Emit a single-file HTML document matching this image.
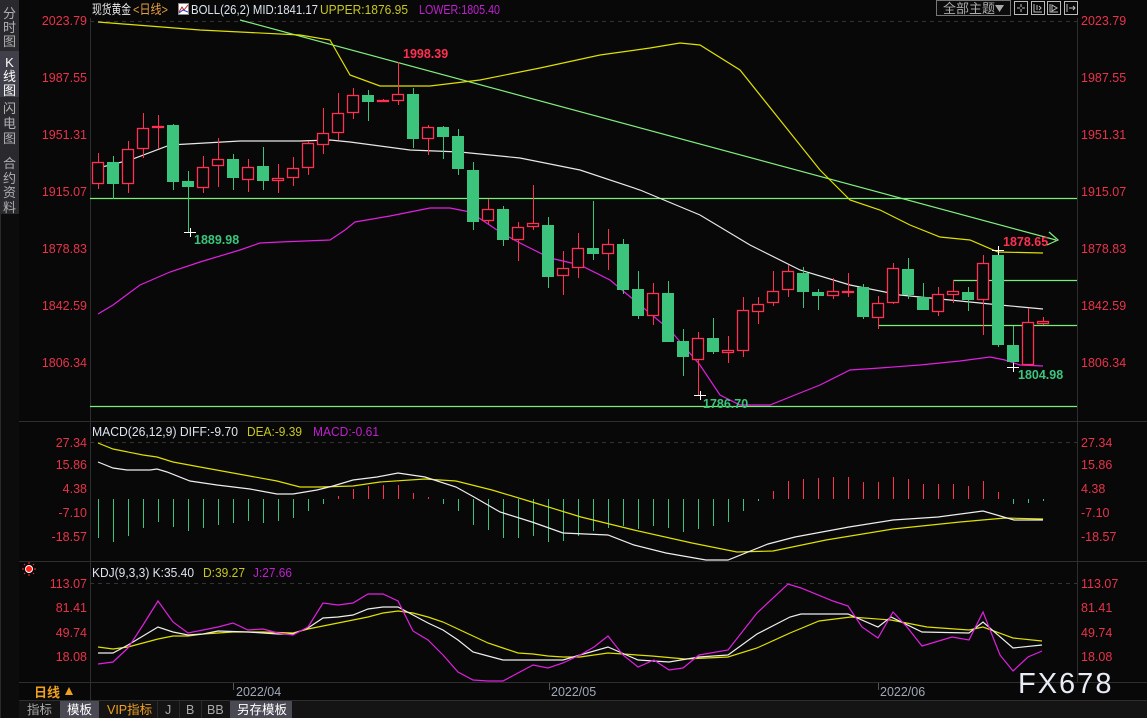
<!DOCTYPE html>
<html><head><meta charset="utf-8"><style>
html,body{margin:0;padding:0;background:#080808;width:1147px;height:718px;overflow:hidden}
svg{display:block}
text{font-family:"Liberation Sans","Noto Sans CJK SC",sans-serif}
</style></head><body>
<svg width="1147" height="718" viewBox="0 0 1147 718" xmlns="http://www.w3.org/2000/svg">
<rect width="1147" height="718" fill="#080808"/>
<rect x="0" y="0" width="19" height="718" fill="#2a2a2e"/>
<rect x="0" y="51" width="19" height="46" fill="#40404a"/>
<rect x="1" y="214" width="18" height="504" fill="#0c0c0c"/>
<g font-size="13" fill="#b0b0b0" text-anchor="middle">
<text x="9.5" y="18">分</text><text x="9.5" y="32">时</text><text x="9.5" y="46">图</text>
<text x="9.5" y="67" fill="#fff">K</text><text x="9.5" y="81" fill="#fff">线</text><text x="9.5" y="95" fill="#fff">图</text>
<text x="9.5" y="113">闪</text><text x="9.5" y="128">电</text><text x="9.5" y="143">图</text>
<text x="9.5" y="168">合</text><text x="9.5" y="183">约</text><text x="9.5" y="197">资</text><text x="9.5" y="212">料</text>
</g>
<g stroke="#2e2e2e" stroke-width="1">
<line x1="90.5" y1="18" x2="90.5" y2="700"/>
<line x1="1077.5" y1="18" x2="1077.5" y2="682"/>
<line x1="19" y1="421.5" x2="1147" y2="421.5"/>
<line x1="19" y1="561.5" x2="1147" y2="561.5"/>
<line x1="19" y1="682.5" x2="1147" y2="682.5"/>
<line x1="19" y1="700.5" x2="1147" y2="700.5"/>
</g>
<g stroke="#333" stroke-dasharray="4,4">
<line x1="90" y1="21.5" x2="1077" y2="21.5"/>
<line x1="90" y1="442.5" x2="1077" y2="442.5"/>
<line x1="90" y1="583.5" x2="1077" y2="583.5"/>
</g>
<g font-size="13">
<text x="92" y="14" fill="#e8e8e8" textLength="39" lengthAdjust="spacingAndGlyphs">现货黄金</text>
<text x="133" y="14" fill="#e8a040" textLength="35" lengthAdjust="spacingAndGlyphs">&lt;日线&gt;</text>
<rect x="178.5" y="3.5" width="10" height="11" fill="#fff" stroke="#888"/>
<path d="M179 12 L182 7 L184 10 L188 5" stroke="#d02020" fill="none"/>
<path d="M179 13 L183 10 L188 12" stroke="#2040d0" fill="none"/>
<text x="191" y="14" fill="#dde4f0" textLength="127" lengthAdjust="spacingAndGlyphs">BOLL(26,2) MID:1841.17</text>
<text x="320" y="14" fill="#c8c820" textLength="88" lengthAdjust="spacingAndGlyphs">UPPER:1876.95</text>
<text x="419" y="14" fill="#c020d0" textLength="81" lengthAdjust="spacingAndGlyphs">LOWER:1805.40</text>
</g>
<rect x="936.5" y="0.5" width="74" height="15" fill="#0c0c0c" stroke="#777"/>
<text x="943" y="13" font-size="13" fill="#aaa">全部主题</text>
<path d="M995 5 L1004 5 L999.5 12 Z" fill="#aaa"/>
<g stroke="#bbb" fill="none">
<rect x="1014.5" y="1.5" width="13" height="13"/><rect x="1031.5" y="1.5" width="13" height="13"/>
<rect x="1047.5" y="1.5" width="13" height="13"/><rect x="1064.5" y="1.5" width="13" height="13"/>
<path d="M1021 4V7M1021 9V12M1017 8H1020M1022 8H1025"/>
<path d="M1034 4V12H1042M1037 5V10M1039 6L1041 8L1039 10"/>
<path d="M1050 4V12H1058M1052 5L1057 8L1052 11Z"/>
<path d="M1067 4V12M1069 8H1075M1073 6L1075 8L1073 10"/>
</g>
<g font-size="12.5" fill="#e8334a">
<g text-anchor="end">
<text x="87" y="25">2023.79</text><text x="87" y="82">1987.55</text><text x="87" y="139">1951.31</text>
<text x="87" y="196">1915.07</text><text x="87" y="253">1878.83</text><text x="87" y="310">1842.59</text><text x="87" y="367">1806.34</text>
<text x="87" y="447">27.34</text><text x="87" y="469">15.86</text><text x="87" y="493">4.38</text><text x="87" y="517">-7.10</text><text x="87" y="541">-18.57</text>
<text x="87" y="588">113.07</text><text x="87" y="612">81.41</text><text x="87" y="637">49.74</text><text x="87" y="661">18.08</text>
</g>
<text x="1081" y="25">2023.79</text><text x="1081" y="82">1987.55</text><text x="1081" y="139">1951.31</text>
<text x="1081" y="196">1915.07</text><text x="1081" y="253">1878.83</text><text x="1081" y="310">1842.59</text><text x="1081" y="367">1806.34</text>
<text x="1081" y="447">27.34</text><text x="1081" y="469">15.86</text><text x="1081" y="493">4.38</text><text x="1081" y="517">-7.10</text><text x="1081" y="541">-18.57</text>
<text x="1081" y="588">113.07</text><text x="1081" y="612">81.41</text><text x="1081" y="637">49.74</text><text x="1081" y="661">18.08</text>
</g>
<g stroke="#78f078" stroke-width="1.2">
<line x1="90" y1="198.5" x2="1077" y2="198.5"/>
<line x1="90" y1="406.5" x2="1077" y2="406.5"/>
<line x1="878" y1="325.5" x2="1077" y2="325.5"/>
<line x1="953" y1="280.5" x2="1077" y2="280.5"/>
<line x1="240" y1="20" x2="1056" y2="240" stroke="#80ee80"/>
<path d="M1049 232 L1058 240 L1047 245" fill="none" stroke="#80ee80"/>
</g>
<polyline fill="none" stroke="#e0e000" stroke-width="1.2" points="98,22 200,30 300,35 330,40 350,75 380,86 430,86 480,80 540,68 600,55 650,48 680,43 700,45 740,70 780,120 820,170 850,200 880,210 910,225 940,237 970,240 998,252 1043,253"/>
<polyline fill="none" stroke="#e8e8e8" stroke-width="1.2" points="98,168 130,160 170,145 240,141 300,141 330,140 350,142 410,150 460,152 520,158 580,170 640,190 700,215 750,245 800,270 850,285 900,295 950,300 1000,305 1043,309"/>
<polyline fill="none" stroke="#e020e0" stroke-width="1.2" points="98,314 113,305 140,285 170,272 200,262 240,250 260,243 280,242 330,240 345,230 355,222 390,216 430,208 450,208 470,212 500,232 520,243 550,258 580,265 610,280 640,305 670,330 700,365 720,395 740,405 770,405 800,393 820,385 850,370 880,368 920,365 960,361 990,357 1005,360 1020,365 1043,366"/>
<path fill="none" stroke="#ff3050" d="M98.5 153V189M128.5 141V193M143.5 113V158M158.5 115V149M203.5 156V193M218.5 138V187M248.5 159V192M278.5 164V193M293.5 157V186M308.5 141V175M323.5 108V154M338.5 93V140M353.5 88V119M383.5 99V102M398.5 62V105M428.5 125V155M488.5 199V224M518.5 222V261M533.5 185V230M563.5 251V295M578.5 233V278M608.5 229V270M653.5 283V325M698.5 332V395M728.5 336V363M743.5 297V357M758.5 297V324M773.5 271V306M788.5 265V297M833.5 278V299M848.5 273V297M878.5 296V329M893.5 263V304M938.5 287V316M953.5 280V303M983.5 255V335M1028.5 308V364M1043.5 317V325"/>
<path fill="none" stroke="#3cc47c" d="M113.5 156V199M173.5 124V190M188.5 171V232M233.5 154V190M263.5 147V190M368.5 90V121M413.5 88V148M443.5 126V159M458.5 129V175M473.5 162V230M503.5 206V246M548.5 217V288M593.5 201V260M623.5 239V294M638.5 271V319M668.5 281V342M683.5 329V376M713.5 318V354M803.5 267V308M818.5 289V310M863.5 284V319M908.5 258V299M923.5 283V310M968.5 287V311M998.5 250V347M1013.5 326V366"/>
<g fill="#080808" stroke="#ff3050" stroke-width="1.3">
<rect x="92.5" y="162.5" width="11" height="21"/><rect x="122.5" y="149.5" width="11" height="34"/><rect x="137.5" y="128.5" width="11" height="20"/><rect x="152.5" y="126.5" width="11" height="1"/>
<rect x="197.5" y="167.5" width="11" height="20"/><rect x="212.5" y="159.5" width="11" height="6"/><rect x="242.5" y="167.5" width="11" height="12"/><rect x="272.5" y="178.5" width="11" height="2"/>
<rect x="287.5" y="168.5" width="11" height="9"/><rect x="302.5" y="143.5" width="11" height="24"/><rect x="317.5" y="133.5" width="11" height="11"/><rect x="332.5" y="113.5" width="11" height="19"/>
<rect x="347.5" y="95.5" width="11" height="17"/><rect x="377.5" y="100.5" width="11" height="1"/><rect x="392.5" y="94.5" width="11" height="6"/><rect x="422.5" y="127.5" width="11" height="11"/>
<rect x="482.5" y="209.5" width="11" height="11"/><rect x="512.5" y="227.5" width="11" height="12"/><rect x="527.5" y="223.5" width="11" height="3"/><rect x="557.5" y="268.5" width="11" height="7"/>
<rect x="572.5" y="248.5" width="11" height="19"/><rect x="602.5" y="244.5" width="11" height="9"/><rect x="647.5" y="293.5" width="11" height="22"/><rect x="692.5" y="338.5" width="11" height="21"/>
<rect x="722.5" y="350.5" width="11" height="2"/><rect x="737.5" y="310.5" width="11" height="40"/><rect x="752.5" y="304.5" width="11" height="7"/><rect x="767.5" y="291.5" width="11" height="11"/>
<rect x="782.5" y="271.5" width="11" height="18"/><rect x="827.5" y="291.5" width="11" height="4"/><rect x="842.5" y="291.5" width="11" height="1"/><rect x="872.5" y="303.5" width="11" height="14"/>
<rect x="887.5" y="268.5" width="11" height="34"/><rect x="932.5" y="294.5" width="11" height="17"/><rect x="947.5" y="291.5" width="11" height="3"/><rect x="977.5" y="263.5" width="11" height="36"/>
<rect x="1022.5" y="322.5" width="11" height="42"/><rect x="1037.5" y="321.5" width="11" height="2"/>
</g>
<g fill="#3cc47c">
<rect x="107" y="162" width="12" height="22"/><rect x="167" y="125" width="12" height="57"/><rect x="182" y="181" width="12" height="6"/><rect x="227" y="159" width="12" height="19"/>
<rect x="257" y="166" width="12" height="15"/><rect x="362" y="95" width="12" height="7"/><rect x="407" y="94" width="12" height="45"/><rect x="437" y="127" width="12" height="10"/>
<rect x="452" y="136" width="12" height="33"/><rect x="467" y="170" width="12" height="52"/><rect x="497" y="209" width="12" height="31"/><rect x="542" y="225" width="12" height="52"/>
<rect x="587" y="248" width="12" height="6"/><rect x="617" y="244" width="12" height="46"/><rect x="632" y="289" width="12" height="27"/><rect x="662" y="293" width="12" height="49"/>
<rect x="677" y="341" width="12" height="16"/><rect x="707" y="338" width="12" height="14"/><rect x="797" y="273" width="12" height="19"/><rect x="812" y="292" width="12" height="4"/>
<rect x="857" y="287" width="12" height="30"/><rect x="902" y="269" width="12" height="26"/><rect x="917" y="297" width="12" height="13"/><rect x="962" y="292" width="12" height="8"/>
<rect x="992" y="255" width="12" height="90"/><rect x="1007" y="345" width="12" height="17"/>
</g>
<g stroke="#fff" fill="none">
<path d="M184 232.5H196M190.5 228V237"/><path d="M694 395.5H706M700.5 391V400"/>
<path d="M992 250.5H1004M998.5 246V255"/><path d="M1007 367.5H1019M1013.5 363V372"/>
</g>
<g font-size="12.5" font-weight="bold">
<text x="403" y="58" fill="#ff3050">1998.39</text>
<text x="194" y="244" fill="#3cc47c">1889.98</text>
<text x="703" y="408" fill="#3cc47c">1786.70</text>
<text x="1003" y="246" fill="#ff3050">1878.65</text>
<text x="1018" y="379" fill="#3cc47c">1804.98</text>
</g>
<g font-size="13">
<text x="92" y="436" fill="#dde4f0" textLength="146" lengthAdjust="spacingAndGlyphs">MACD(26,12,9) DIFF:-9.70</text>
<text x="247" y="436" fill="#c8c820" textLength="55" lengthAdjust="spacingAndGlyphs">DEA:-9.39</text>
<text x="313" y="436" fill="#c020d0" textLength="66" lengthAdjust="spacingAndGlyphs">MACD:-0.61</text>
</g>
<path stroke="#3cc47c" fill="none" d="M98.5 499V538M113.5 499V542M128.5 499V536M143.5 499V528M158.5 499V522M173.5 499V527M188.5 499V531M203.5 499V528M218.5 499V525M233.5 499V523M248.5 499V521M263.5 499V523M278.5 499V521M293.5 499V518M308.5 499V511M323.5 499V504M443.5 499V504M458.5 499V511M473.5 499V525M488.5 499V530M503.5 499V538M518.5 499V538M533.5 499V536M548.5 499V542M563.5 499V541M578.5 499V536M593.5 499V531M608.5 499V528M623.5 499V526M638.5 499V529M653.5 499V526M668.5 499V528M683.5 499V532M698.5 499V529M713.5 499V526M728.5 499V522M743.5 499V511M758.5 499V501M1013.5 499V504M1028.5 499V503M1043.5 499V501"/>
<path stroke="#ff3050" fill="none" d="M338.5 499V496M353.5 499V489M368.5 499V486M383.5 499V485M398.5 499V485M413.5 499V493M428.5 499V497M773.5 499V491M788.5 499V481M803.5 499V479M818.5 499V478M833.5 499V477M848.5 499V477M863.5 499V482M878.5 499V482M893.5 499V477M908.5 499V479M923.5 499V484M938.5 499V484M953.5 499V484M968.5 499V486M983.5 499V481M998.5 499V492"/>
<polyline fill="none" stroke="#e0e000" stroke-width="1.2" points="98,443 113,449 143,455 157,457 173,462 200,467 233,473 277,481 300,487 320,487 353,486 380,482 425,479 456,481 492,490 532,502 581,517 634,530 692,543 737,552 773,551 826,540 893,529 960,522 1005,518 1043,519"/>
<polyline fill="none" stroke="#eee" stroke-width="1.2" points="98,462 113,468 127,470 150,470 157,469 167,472 190,481 217,485 250,489 277,494 293,494 317,490 333,486 353,480 377,477 398,473 425,477 456,487 474,497 500,512 532,522 563,533 608,535 634,545 666,553 706,560 728,560 768,544 795,537 849,527 893,520 938,517 983,511 1014,520 1043,520"/>
<circle cx="29" cy="569" r="3.5" fill="#ff2020" stroke="#fff"/>
<path d="M22 569H24M34 569H36M29 562V564M29 574V576M24 564L25 565M33 573L34 574M24 574L25 573M33 564L34 565" stroke="#ff3030"/>
<g font-size="13">
<text x="92" y="577" fill="#dde4f0" textLength="102" lengthAdjust="spacingAndGlyphs">KDJ(9,3,3) K:35.40</text>
<text x="203" y="577" fill="#c8c820" textLength="42" lengthAdjust="spacingAndGlyphs">D:39.27</text>
<text x="253" y="577" fill="#c020d0" textLength="39" lengthAdjust="spacingAndGlyphs">J:27.66</text>
</g>
<polyline fill="none" stroke="#e0e000" stroke-width="1.2" points="98,647 113,649 128,647 143,643 158,639 173,636 188,636 203,634 218,633 233,632 263,632 293,633 308,629 323,626 338,623 353,620 368,617 383,613 398,611 413,613 428,617 443,622 458,629 473,636 488,643 503,648 518,653 533,654 548,656 563,657 580,657 608,653 652,656 685,659 728,657 757,648 790,633 819,621 851,617 891,620 927,627 969,630 983,627 1013,638 1042,641"/>
<polyline fill="none" stroke="#eee" stroke-width="1.2" points="98,653 113,653 128,645 143,636 158,627 173,632 188,635 203,634 218,631 248,632 278,634 293,634 308,628 323,618 338,617 353,615 368,609 383,607 398,607 413,615 428,623 443,630 458,640 473,652 488,656 503,660 518,660 548,660 563,660 580,655 608,647 638,660 669,662 699,657 728,655 757,634 790,617 801,614 848,614 878,627 891,617 922,632 969,633 983,622 1013,648 1042,645"/>
<polyline fill="none" stroke="#e020e0" stroke-width="1.2" points="98,664 113,662 128,648 143,625 158,601 173,622 188,633 203,630 218,627 233,623 248,630 263,629 278,633 293,635 308,627 323,603 338,605 353,603 368,594 383,594 398,601 413,631 428,640 443,655 458,672 473,680 488,681 503,681 518,673 533,665 548,668 563,663 580,655 594,647 608,636 623,655 638,667 654,660 669,670 683,668 699,655 728,650 757,613 788,584 801,588 833,601 848,606 862,627 878,638 893,612 907,627 922,646 952,637 969,640 983,612 1000,655 1013,671 1028,657 1042,651"/>
<g stroke="#555"><line x1="233.5" y1="683" x2="233.5" y2="690"/><line x1="549.5" y1="683" x2="549.5" y2="690"/><line x1="878.5" y1="683" x2="878.5" y2="690"/></g>
<g font-size="12.5" fill="#a0a8b8">
<text x="236" y="696">2022/04</text><text x="551" y="696">2022/05</text><text x="880" y="696">2022/06</text>
</g>
<text x="34" y="697" font-size="13" font-weight="bold" fill="#f0a020">日线</text>
<path d="M65 695 L69 687 L73 695 Z" fill="#f0a020"/>
<text x="1018" y="693" font-size="29" fill="#e8ecf4" letter-spacing="2">FX678</text>
<rect x="19" y="701" width="1128" height="17" fill="#141414"/>
<rect x="60" y="701" width="39" height="17" fill="#4a4a55"/>
<rect x="230" y="701" width="62" height="17" fill="#4a4a55"/>
<g stroke="#2a2a2a"><line x1="157.5" y1="701" x2="157.5" y2="718"/><line x1="179.5" y1="701" x2="179.5" y2="718"/><line x1="201.5" y1="701" x2="201.5" y2="718"/></g>
<g font-size="12.5">
<text x="27" y="714" fill="#aaa">指标</text>
<text x="67" y="714" fill="#fff">模板</text>
<text x="107" y="714" fill="#f0a020">VIP指标</text>
<text x="165" y="714" fill="#aaa">J</text>
<text x="186" y="714" fill="#aaa">B</text>
<text x="207" y="714" fill="#aaa">BB</text>
<text x="237" y="714" fill="#fff">另存模板</text>
</g>
</svg>
</body></html>
